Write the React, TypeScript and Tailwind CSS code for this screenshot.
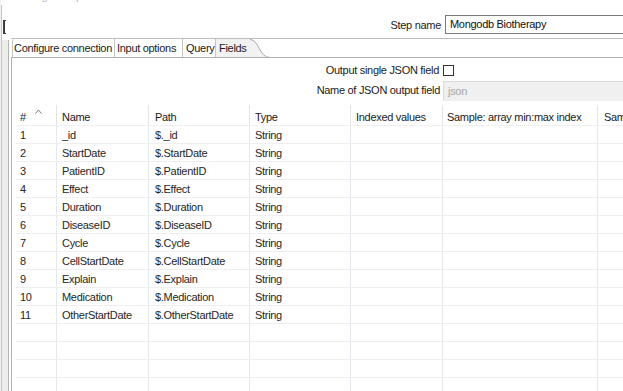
import React from "react";

const fieldNames = [
  "_id",
  "StartDate",
  "PatientID",
  "Effect",
  "Duration",
  "DiseaseID",
  "Cycle",
  "CellStartDate",
  "Explain",
  "Medication",
  "OtherStartDate",
];

// fixed column widths, border-r on the right edge of each cell
const columns = [
  { key: "num", label: "#", w: "w-[42px]", pad: "pl-[5px]" },
  { key: "name", label: "Name", w: "w-[92px]", pad: "pl-[5px]" },
  { key: "path", label: "Path", w: "w-[101px]", pad: "pl-[6px]" },
  { key: "type", label: "Type", w: "w-[101px]", pad: "pl-[5px]" },
  { key: "indexed", label: "Indexed values", w: "w-[92px]", pad: "pl-[5px]" },
  { key: "sample", label: "Sample: array min:max index", w: "w-[155px]", pad: "pl-[4px]" },
  { key: "sample2", label: "Sample: value", w: "w-[120px]", pad: "pl-[6px]" },
];

const SortArrow = () => (
  <svg width="7" height="5" viewBox="0 0 7 5" className="ml-[9px] -mt-[12px]">
    <path d="M0.5 4.5 L3.5 1 L6.5 4.5" fill="none" stroke="#7a7a7a" strokeWidth="1" />
  </svg>
);

const TabCurve = () => (
  <svg width="20" height="19" viewBox="0 0 20 19" className="shrink-0 block">
    <path d="M0 0 C 9 0, 9 18.5, 20 18.5 L 0 18.5 Z" fill="#f2f2f2" />
    <path d="M0 0.5 C 9 0.5, 9 18.5, 20 18.5" fill="none" stroke="#a9a9a9" strokeWidth="1" />
  </svg>
);

export default function App() {
  const rows = [
    ...fieldNames.map((n, i) => ({
      num: String(i + 1),
      name: n,
      path: `$.${n}`,
      type: "String",
    })),
    ...Array.from({ length: 4 }, () => ({ num: "", name: "", path: "", type: "" })),
  ];

  return (
    <div className="w-[623px] h-[391px] overflow-hidden bg-white flex text-[11px] tracking-[-0.3px] text-[#1b1b1b] font-['Liberation_Sans',Arial,sans-serif]">
      {/* left window frame */}
      <div className="flex shrink-0 h-full">
        <div className="w-[1px] bg-[#f0f0f0]" />
        <div className="w-[1px] mt-[5px] bg-[#c4c4c4]" />
        <div className="w-[6px] flex flex-col">
          <div className="h-[20px] bg-white" />
          <div className="h-[14px] ml-[1px] w-[3px] border-l-2 border-t border-b border-[#3c3c3c]" />
          <div className="flex-1 mt-[6px] bg-[#ececec]" />
        </div>
        <div className="w-[1px] mt-[40px] bg-[#b4b4b4]" />
        <div className="w-[2px] bg-white" />
      </div>

      {/* main */}
      <div className="flex-1 flex flex-col min-w-0">
        <div className="h-[39px] shrink-0 border-b border-[#bcbcbc] flex flex-col">
          <div className="h-[15px] -mt-[11px] leading-[15px] pl-[10px] text-[#b4b4b4] whitespace-nowrap">
            Mongodb Input
          </div>
          <div className="flex items-center mt-[11px] whitespace-nowrap">
            <div className="w-[434px] shrink-0 text-right pr-[4px] leading-[18px]">Step name</div>
            <div className="w-[200px] h-[19px] shrink-0 border border-[#7a7a7a] border-r-0 pl-[4px] leading-[17px] text-[#111]">
              Mongodb Biotherapy
            </div>
          </div>
        </div>

        {/* tabs */}
        <div className="h-[18px] shrink-0 flex whitespace-nowrap leading-[19px]">
          <div className="ml-[1px] w-[103px] shrink-0 pl-[1px] border-l border-r border-[#c6c6c6] rounded-tl-[3px] bg-white">
            Configure connection
          </div>
          <div className="w-[68px] shrink-0 pl-[2px] border-r border-[#c6c6c6] bg-white">Input options</div>
          <div className="w-[33px] shrink-0 pl-[3px] border-r border-[#c6c6c6] bg-white">Query</div>
          <div className="flex bg-white">
            <div className="w-[34px] shrink-0 pl-[3px] bg-[#f2f2f2]">Fields</div>
            <TabCurve />
          </div>
        </div>

        {/* content panel */}
        <div className="flex-1 border-t border-l border-[#b0b0b0] flex flex-col min-h-0">
          <div className="pt-[6px] flex flex-col whitespace-nowrap">
            <div className="flex items-center h-[13px]">
              <div className="w-[431px] shrink-0 text-right pr-[4px]">Output single JSON field</div>
              <div className="w-[11px] h-[11px] border border-[#333] bg-white shrink-0" />
            </div>
            <div className="flex items-center h-[19px] mt-[4px]">
              <div className="w-[431px] shrink-0 text-right pr-[3px]">Name of JSON output field</div>
              <div className="w-[200px] h-[20px] shrink-0 bg-[#f0f0f0] border-t border-l border-[#dadada] pl-[4px] leading-[19px] text-[#a6a6a6]">
                json
              </div>
            </div>
          </div>

          {/* table */}
          <div className="mt-[4px] ml-[3px] flex flex-col whitespace-nowrap">
            <div className="h-[22px] flex items-end border-b border-[#f0f0f0]">
              {columns.map((c) => (
                <div
                  key={c.key}
                  className={`${c.w} ${c.pad} h-[20px] shrink-0 border-r border-[#e4e4e4] flex items-center pt-[4px] overflow-hidden`}
                >
                  {c.label}
                  {c.key === "num" && <SortArrow />}
                </div>
              ))}
            </div>
            {rows.map((r, i) => (
              <div key={i} className="h-[18px] flex border-b border-[#efefef]">
                {columns.map((c) => (
                  <div
                    key={c.key}
                    className={`${c.w} ${c.pad} h-full shrink-0 border-r border-[#e3e9ef] pt-[1px] leading-[17px] text-[#262626] overflow-hidden`}
                  >
                    {(r as Record<string, string>)[c.key] ?? ""}
                  </div>
                ))}
              </div>
            ))}
          </div>
        </div>
      </div>
    </div>
  );
}
